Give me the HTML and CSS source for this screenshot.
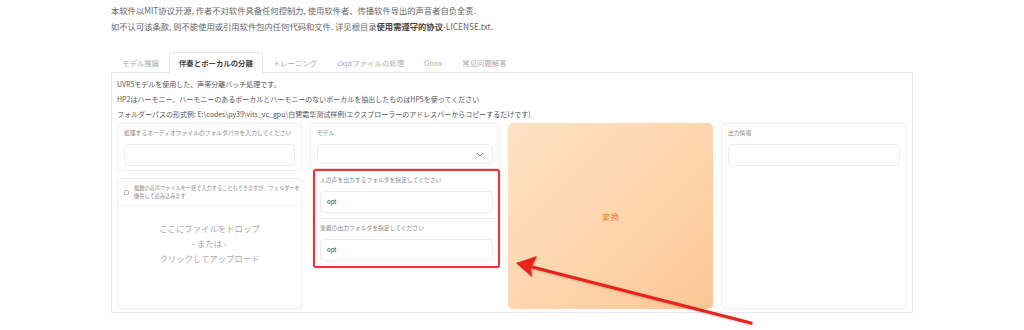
FILE: index.html
```html
<!DOCTYPE html>
<html lang="ja">
<head>
    <meta charset="UTF-8">
    <meta name="viewport" content="width=device-width, initial-scale=1.0">
    <title>UVR5 伴奏とボーカルの分離</title>
    <link rel="stylesheet" href="styles.css">
</head>
<body>
    <div class="page">
        <div class="intro">
            <p>本软件以MIT协议开源, 作者不对软件具备任何控制力, 使用软件者、传播软件导出的声音者自负全责.</p>
            <p>如不认可该条款, 则不能使用或引用软件包内任何代码和文件. 详见根目录<b>使用需遵守的协议</b>-LICENSE.txt.</p>
        </div>

        <div class="tabs">
            <span class="tab">モデル推論</span>
            <span class="tab active">伴奏とボーカルの分離</span>
            <span class="tab">トレーニング</span>
            <span class="tab">ckptファイルの処理</span>
            <span class="tab">Onnx</span>
            <span class="tab">常见问题解答</span>
        </div>

        <div class="panel">
            <div class="desc">
                <p>UVR5モデルを使用した、声帯分離バッチ処理です。</p>
                <p>HP2はハーモニー、ハーモニーのあるボーカルとハーモニーのないボーカルを抽出したものはHP5を使ってください</p>
                <p>フォルダーパスの形式例: E:\codes\py39\vits_vc_gpu\白鷺霜华测试样例(エクスプローラーのアドレスバーからコピーするだけです)</p>
            </div>

            <div class="row">
                <div class="col">
                    <div class="box">
                        <div class="label">処理するオーディオファイルのフォルダパスを入力してください</div>
                        <div class="input"></div>
                    </div>
                    <div class="box upload">
                        <div class="upload-head">
                            <span class="file-icon"></span>
                            <span>複数の音声ファイルを一括で入力することもできますが、フォルダーを<br>優先して読み込みます</span>
                        </div>
                        <div class="drop">
                            ここにファイルをドロップ<br>- または -<br>クリックしてアップロード
                        </div>
                    </div>
                </div>

                <div class="col">
                    <div class="box">
                        <div class="label">モデル</div>
                        <div class="input select">
                            <svg width="8" height="5" viewBox="0 0 8 5"><path d="M1 1l3 3 3-3" fill="none" stroke="#888" stroke-width="1"/></svg>
                        </div>
                    </div>
                    <div class="group">
                        <div class="group-item">
                            <div class="label">人の声を出力するフォルダを指定してください</div>
                            <div class="input text">opt</div>
                        </div>
                        <div class="group-item">
                            <div class="label">楽器の出力フォルダを指定してください</div>
                            <div class="input text">opt</div>
                        </div>
                    </div>
                </div>

                <button class="convert">変換</button>

                <div class="col">
                    <div class="box tall">
                        <div class="label">出力情報</div>
                        <div class="input"></div>
                    </div>
                </div>
            </div>
        </div>
    </div>

    <svg class="arrow" width="1024" height="330" viewBox="0 0 1024 330">
        <line x1="751" y1="323" x2="532" y2="267" stroke="#e8221c" stroke-width="3.2" stroke-linecap="round"/>
        <path d="M516 263 L537 256 L531 268 L532 277 Z" fill="#e8221c"/>
    </svg>
</body>
</html>
```

FILE: styles.css
```css
* {
    margin: 0;
    padding: 0;
    box-sizing: border-box;
}

body {
    font-family: "Noto Sans CJK JP", "Noto Sans", sans-serif;
    color: #555;
    background: white;
    width: 1024px;
    height: 330px;
    overflow: hidden;
    position: relative;
}

.page {
    width: 802px;
    margin: 0 auto;
}

.intro {
    padding-top: 2px;
    font-size: 8.3px;
    line-height: 16px;
    color: #666;
}

.intro b {
    color: #444;
}

.tabs {
    display: flex;
    margin-top: 18px;
    font-size: 7.4px;
    height: 21px;
}

.tab {
    padding: 0 9px;
    line-height: 20px;
    color: #aaa;
    border: 1px solid transparent;
    border-bottom: none;
}

.tab:first-child {
    padding-left: 10px;
}

.tab.active {
    color: #444;
    font-weight: bold;
    background: white;
    border-color: #e5e5e5;
    border-radius: 3px 3px 0 0;
    position: relative;
    z-index: 1;
    height: 21px;
}

.panel {
    border: 1px solid #e8e8e8;
    margin-top: -1px;
    height: 241px;
    padding: 4px 5px;
}

.desc {
    font-size: 7px;
    line-height: 15px;
    color: #555;
}

.row {
    display: grid;
    grid-template-columns: 185px 190px 205px 1fr;
    column-gap: 8px;
    margin-top: 1px;
    height: 186px;
}

.col {
    display: flex;
    flex-direction: column;
    gap: 7px;
}

.box {
    border: 1px solid #f0f0f0;
    border-radius: 4px;
    padding: 4px 6px 4px;
}

.label {
    font-size: 5.8px;
    line-height: 10px;
    color: #888;
    margin-bottom: 6px;
    white-space: nowrap;
}

.input {
    height: 22px;
    border: 1px solid #eeeeee;
    border-radius: 4px;
    background: white;
}

.select {
    height: 20px;
    display: flex;
    align-items: center;
    justify-content: flex-end;
    padding-right: 8px;
}

.text {
    font-size: 6px;
    line-height: 20px;
    padding-left: 6px;
    color: #444;
}

.upload {
    flex: 1;
    padding: 0;
    display: flex;
    flex-direction: column;
}

.upload-head {
    display: flex;
    gap: 5px;
    align-items: center;
    padding: 5px 4px 5px 6px;
    font-size: 5.2px;
    line-height: 8px;
    color: #888;
    white-space: nowrap;
    overflow: hidden;
    border-bottom: 1px solid #f3f3f3;
}

.file-icon {
    flex: none;
    width: 5px;
    height: 5px;
    border: 1px solid #bbb;
    border-radius: 1px;
}

.drop {
    flex: 1;
    display: flex;
    align-items: center;
    justify-content: center;
    text-align: center;
    font-size: 8.4px;
    line-height: 15px;
    color: #aaa;
    padding-bottom: 28px;
}

.group {
    margin: -7px 0 0 3px;
    border: 2px solid #e8343a;
    border-radius: 3px;
    box-shadow: 0 0 2px rgba(232, 52, 58, 0.35);
    background: white;
}

.group-item {
    padding: 4px 5px 5px;
}

.group-item + .group-item {
    border-top: 1px solid #f0f0f0;
}

.convert {
    border: none;
    border-radius: 5px;
    background: linear-gradient(135deg, #fee2c4 0%, #fdd5ad 55%, #fcc693 100%);
    color: #e4822f;
    font-family: "Noto Sans CJK JP", sans-serif;
    font-size: 8.5px;
}

.tall {
    height: 100%;
}

.arrow {
    position: absolute;
    top: 0;
    left: 0;
    pointer-events: none;
    filter: drop-shadow(1px 1px 1px rgba(0, 0, 0, 0.25));
}
```
